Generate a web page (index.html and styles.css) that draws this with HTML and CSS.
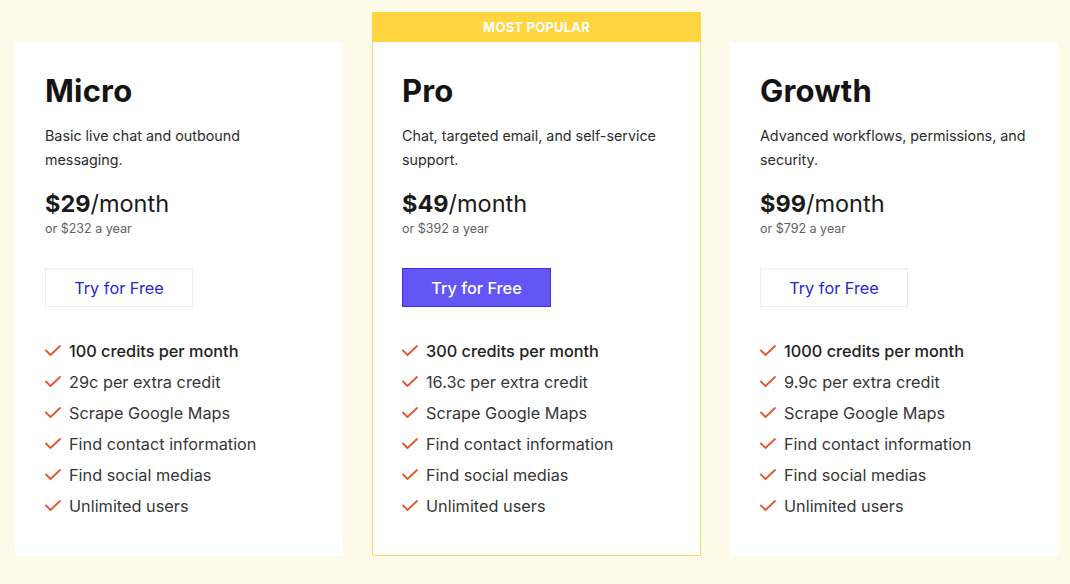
FILE: index.html
```html
<!DOCTYPE html>
<html lang="en">
<head>
<meta charset="utf-8">
<title>Pricing</title>
<link rel="stylesheet" href="styles.css">
</head>
<body>
<main class="plans">
  <section class="card">
    <div class="card-body">
      <h2 class="plan-name">Micro</h2>
      <p class="plan-desc">Basic live chat and outbound messaging.</p>
      <div class="price"><strong>$29</strong>/month</div>
      <div class="yearly">or $232 a year</div>
      <a class="btn" href="#">Try for Free</a>
      <ul class="features">
        <li class="lead"><svg viewBox="0 0 16 12"><polyline points="1,5.5 5.5,10 15,1"/></svg>100 credits per month</li>
        <li><svg viewBox="0 0 16 12"><polyline points="1,5.5 5.5,10 15,1"/></svg>29c per extra credit</li>
        <li><svg viewBox="0 0 16 12"><polyline points="1,5.5 5.5,10 15,1"/></svg>Scrape Google Maps</li>
        <li><svg viewBox="0 0 16 12"><polyline points="1,5.5 5.5,10 15,1"/></svg>Find contact information</li>
        <li><svg viewBox="0 0 16 12"><polyline points="1,5.5 5.5,10 15,1"/></svg>Find social medias</li>
        <li><svg viewBox="0 0 16 12"><polyline points="1,5.5 5.5,10 15,1"/></svg>Unlimited users</li>
      </ul>
    </div>
  </section>

  <section class="card card-featured">
    <div class="badge">MOST POPULAR</div>
    <div class="card-body">
      <h2 class="plan-name">Pro</h2>
      <p class="plan-desc">Chat, targeted email, and self-service support.</p>
      <div class="price"><strong>$49</strong>/month</div>
      <div class="yearly">or $392 a year</div>
      <a class="btn btn-primary" href="#">Try for Free</a>
      <ul class="features">
        <li class="lead"><svg viewBox="0 0 16 12"><polyline points="1,5.5 5.5,10 15,1"/></svg>300 credits per month</li>
        <li><svg viewBox="0 0 16 12"><polyline points="1,5.5 5.5,10 15,1"/></svg>16.3c per extra credit</li>
        <li><svg viewBox="0 0 16 12"><polyline points="1,5.5 5.5,10 15,1"/></svg>Scrape Google Maps</li>
        <li><svg viewBox="0 0 16 12"><polyline points="1,5.5 5.5,10 15,1"/></svg>Find contact information</li>
        <li><svg viewBox="0 0 16 12"><polyline points="1,5.5 5.5,10 15,1"/></svg>Find social medias</li>
        <li><svg viewBox="0 0 16 12"><polyline points="1,5.5 5.5,10 15,1"/></svg>Unlimited users</li>
      </ul>
    </div>
  </section>

  <section class="card">
    <div class="card-body">
      <h2 class="plan-name">Growth</h2>
      <p class="plan-desc">Advanced workflows, permissions, and security.</p>
      <div class="price"><strong>$99</strong>/month</div>
      <div class="yearly">or $792 a year</div>
      <a class="btn" href="#">Try for Free</a>
      <ul class="features">
        <li class="lead"><svg viewBox="0 0 16 12"><polyline points="1,5.5 5.5,10 15,1"/></svg>1000 credits per month</li>
        <li><svg viewBox="0 0 16 12"><polyline points="1,5.5 5.5,10 15,1"/></svg>9.9c per extra credit</li>
        <li><svg viewBox="0 0 16 12"><polyline points="1,5.5 5.5,10 15,1"/></svg>Scrape Google Maps</li>
        <li><svg viewBox="0 0 16 12"><polyline points="1,5.5 5.5,10 15,1"/></svg>Find contact information</li>
        <li><svg viewBox="0 0 16 12"><polyline points="1,5.5 5.5,10 15,1"/></svg>Find social medias</li>
        <li><svg viewBox="0 0 16 12"><polyline points="1,5.5 5.5,10 15,1"/></svg>Unlimited users</li>
      </ul>
    </div>
  </section>
</main>
</body>
</html>
```

FILE: styles.css
```css
* { box-sizing: border-box; }

html, body {
  margin: 0;
  padding: 0;
  background: #fefae9;
  font-family: "Inter", "Liberation Sans", sans-serif;
  color: #222;
}

.plans {
  display: flex;
  align-items: flex-end;
  gap: 29px;
  padding: 12px 12px 28px 15px;
}

.card {
  width: 328px;
  background: #fff;
  flex: none;
}

.card-featured {
  width: 329px;
  border: 1px solid #f7d868;
}

.badge {
  height: 30px;
  margin: -1px -1px 0;
  background: #ffd53f;
  color: #fff;
  font-size: 13px;
  font-weight: 700;
  letter-spacing: 0.2px;
  text-align: center;
  line-height: 30px;
}

.card-body {
  padding: 31px 30px 35px;
}

.card-featured .card-body {
  padding: 31px 29px 34px;
}

.plan-name {
  margin: 0;
  font-size: 31px;
  line-height: 36px;
  font-weight: 700;
  color: #141414;
  letter-spacing: 0.2px;
}

.plan-desc {
  margin: 15px -2px 0 0;
  font-size: 14.3px;
  line-height: 24px;
  color: #2c2c2c;
}

.price {
  margin-top: 17px;
  font-size: 23.5px;
  line-height: 30px;
  color: #1a1a1a;
  font-weight: 400;
}

.price strong { font-weight: 700; }

.yearly {
  margin-top: 1px;
  font-size: 12.5px;
  line-height: 18px;
  color: #5f5f5f;
}

.btn {
  display: flex;
  align-items: center;
  justify-content: center;
  width: 148px;
  height: 39px;
  margin-top: 30px;
  border: 1px solid #ececf2;
  background: #fff;
  color: #2626d4;
  font-size: 16.3px;
  text-decoration: none;
}

.btn-primary {
  width: 149px;
  background: #6356f5;
  border-color: #3b30e6;
  color: #fff;
  font-weight: 500;
}

.features {
  list-style: none;
  margin: 28px 0 0;
  padding: 0;
}

.features li {
  display: flex;
  align-items: center;
  height: 31px;
  font-size: 16.3px;
  color: #363636;
}

.features li.lead {
  font-weight: 500;
  color: #222;
}

.features svg {
  width: 16px;
  height: 12px;
  margin-right: 8px;
  flex: none;
  fill: none;
  stroke: #e3572c;
  stroke-width: 1.8;
  stroke-linecap: round;
  stroke-linejoin: round;
}
```
